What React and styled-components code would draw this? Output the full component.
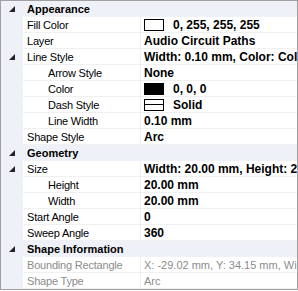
import React from 'react';
import styled, { createGlobalStyle } from 'styled-components';

const GlobalStyle = createGlobalStyle`
  html, body {
    margin: 0;
    padding: 0;
    background: #fff;
  }
  body {
    font-family: "Liberation Sans", Arial, sans-serif;
    font-size: 11px;
  }
`;

const Grid = styled.div`
  width: 296px;
  height: 288px;
  border: 1px solid #a0a0a0;
  background: #fff;
  overflow: hidden;
  display: flex;
  flex-direction: column;
`;

const CategoryRow = styled.div`
  display: flex;
  align-items: center;
  height: 16px;
  flex: none;
  background: #eef1f7;
`;

const Gutter = styled.div`
  width: 22px;
  height: 100%;
  flex: none;
  display: flex;
  align-items: center;
  justify-content: center;
  background: #eef1f7;
`;

const CategoryName = styled.div`
  padding-left: 4px;
  font-weight: bold;
  color: #000;
  white-space: nowrap;
`;

const PropRow = styled.div`
  display: flex;
  height: 16px;
  flex: none;
`;

const Cells = styled.div`
  flex: 1;
  display: flex;
  border-bottom: 1px solid #f0f0f0;
  min-width: 0;
`;

const Label = styled.div`
  width: 118px;
  flex: none;
  box-sizing: border-box;
  padding-left: ${(p) => (p.$sub ? 25 : 4)}px;
  border-right: 1px solid #f0f0f0;
  display: flex;
  align-items: center;
  white-space: nowrap;
  overflow: hidden;
  letter-spacing: -0.2px;
  color: ${(p) => (p.$readOnly ? '#8c8c8c' : '#000')};
`;

const Value = styled.div`
  flex: 1;
  min-width: 0;
  padding-left: 3px;
  display: flex;
  align-items: center;
  gap: 9px;
  white-space: nowrap;
  overflow: hidden;
  font-size: ${(p) => (p.$readOnly ? 11 : 12)}px;
  font-weight: ${(p) => (p.$readOnly ? 'normal' : 'bold')};
  color: ${(p) => (p.$readOnly ? '#8c8c8c' : '#000')};
`;

const Swatch = styled.span`
  width: 18px;
  height: 10px;
  flex: none;
  border: 1px solid #000;
  background: ${(p) => p.$fill};
  position: relative;
`;

const DashLine = styled.span`
  position: absolute;
  left: 0;
  right: 0;
  top: 4px;
  height: 1px;
  background: #000;
`;

const Expander = () => (
  <svg width="6" height="6" viewBox="0 0 6 6">
    <polygon points="6,0 6,6 0,6" fill="#262626" />
  </svg>
);

const Category = ({ name }) => (
  <CategoryRow>
    <Gutter>
      <Expander />
    </Gutter>
    <CategoryName>{name}</CategoryName>
  </CategoryRow>
);

const Prop = ({ label, value, sub, expandable, readOnly, swatch, dash }) => (
  <PropRow>
    <Gutter>{expandable && <Expander />}</Gutter>
    <Cells>
      <Label $sub={sub} $readOnly={readOnly}>{label}</Label>
      <Value $readOnly={readOnly}>
        {swatch && (
          <Swatch $fill={swatch}>{dash && <DashLine />}</Swatch>
        )}
        <span>{value}</span>
      </Value>
    </Cells>
  </PropRow>
);

export default function App() {
  return (
    <>
      <GlobalStyle />
      <Grid>
        <Category name="Appearance" />
        <Prop label="Fill Color" value="0, 255, 255, 255" swatch="#fff" />
        <Prop label="Layer" value="Audio Circuit Paths" />
        <Prop label="Line Style" value="Width: 0.10 mm, Color: Color [Black], Dash Style: Solid" expandable />
        <Prop label="Arrow Style" value="None" sub />
        <Prop label="Color" value="0, 0, 0" sub swatch="#000" />
        <Prop label="Dash Style" value="Solid" sub swatch="#fff" dash />
        <Prop label="Line Width" value="0.10 mm" sub />
        <Prop label="Shape Style" value="Arc" />
        <Category name="Geometry" />
        <Prop label="Size" value="Width: 20.00 mm, Height: 20.00 mm" expandable />
        <Prop label="Height" value="20.00 mm" sub />
        <Prop label="Width" value="20.00 mm" sub />
        <Prop label="Start Angle" value="0" />
        <Prop label="Sweep Angle" value="360" />
        <Category name="Shape Information" />
        <Prop label="Bounding Rectangle" value="X: -29.02 mm, Y: 34.15 mm, Width: 20.00 mm, Height: 20.00 mm" readOnly />
        <Prop label="Shape Type" value="Arc" readOnly />
      </Grid>
    </>
  );
}
